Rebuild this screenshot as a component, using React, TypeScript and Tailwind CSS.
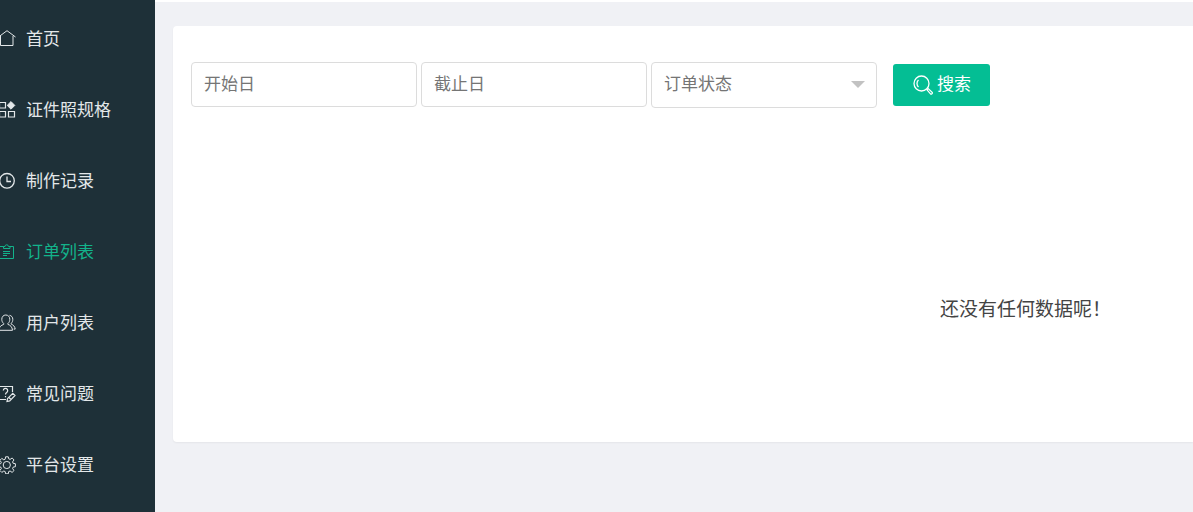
import type { ReactNode } from 'react'

interface NavItem {
  label: string
  icon: ReactNode
  active?: boolean
}

const navItems: NavItem[] = [
  {
    label: '首页',
    icon: <path d="M.5 7 9 .7 17.500 7M2.500 6v9.500h12.500V6" />,
  },
  {
    label: '证件照规格',
    icon: (
      <>
        <path d="M1.500 1.500h6v5.500h-6zM1.500 10.500h6v5.500h-6zM10.500 10.500h6v5.500h-6z" strokeWidth="1.200" />
        <path d="m13 .6 3.800 3.800L13 8.200 9.200 4.400z" fill="currentColor" />
      </>
    ),
  },
  {
    label: '制作记录',
    icon: (
      <g strokeWidth="1.300">
        <circle cx="9" cy="8.800" r="7.300" />
        <path d="M9 4.500v5h4" />
      </g>
    ),
  },
  {
    label: '订单列表',
    active: true,
    icon: (
      <>
        <path d="M5.500 3.500h-4v12h14v-12h-4" />
        <path d="M5.500 5.500v-2h1.500a1.700 1.700 0 0 1 3.400 0h1.600v2zM5 8.500h7M5 10.500h7M5 12.500h4" />
      </>
    ),
  },
  {
    label: '用户列表',
    icon: (
      <>
        <path d="M5.700 9.500C4.300 8.300 3.800 6.900 3.800 5.300c0-2.500 1.600-4.300 4-4.300s4 1.800 4 4.300c0 1.600-.5 3-1.900 4.200v.9c2.500.9 4.300 2.300 4.600 5.900H.8c.3-3.600 2.400-5 4.900-5.900z" />
        <path d="M11.500 1.300c2 .3 3.300 1.900 3.300 4.100 0 1.500-.5 2.800-1.600 3.900v.8c2 .8 3.700 2.300 4 5h-1.500" />
      </>
    ),
  },
  {
    label: '常见问题',
    icon: (
      <g strokeWidth="1.200">
        <path d="M14.500 7V1.500h-14v13h7.500" />
        <path d="M5.300 5.500a2.200 2.200 0 1 1 3.400 1.900c-.9.600-1.200 1-1.200 2M7.500 11v1.200" />
        <path d="m9.500 13.700 5.300-5.400 2.200 2.200-5.300 5.400-2.700.6zM11 12.500l2 2" />
      </g>
    ),
  },
  {
    label: '平台设置',
    icon: (
      <>
        <path d="m7.600.8-.4 2.400-1.400.6-2-1.400-1.900 1.900 1.400 2-.6 1.400-2.200.3v2.700l2.300.4.5 1.400-1.400 2 1.900 1.900 2-1.400 1.400.6.400 2.200h2.700l.4-2.300 1.400-.5 2 1.400 1.900-1.900-1.400-2 .6-1.400 2.200-.4V7.700l-2.300-.4-.5-1.400 1.400-2-1.900-1.900-2 1.400-1.400-.6-.4-2z" />
        <circle cx="8.800" cy="9" r="3.600" />
      </>
    ),
  },
]

function Sidebar() {
  return (
    <nav className="w-[155px] shrink-0 overflow-hidden bg-[#1e3038] pt-[3px]">
      {navItems.map((item) => (
        <a
          key={item.label}
          href="#"
          className={`flex h-[71px] items-center gap-2.5 text-[17px] ${item.active ? 'text-[#13b38b]' : 'text-[#e3e7e9]'}`}
        >
          <svg
            viewBox="0 0 18 18"
            className="-ml-0.5 size-[18px] shrink-0"
            fill="none"
            stroke="currentColor"
            strokeWidth="1"
            aria-hidden="true"
          >
            {item.icon}
          </svg>
          <span className="pt-0.5 whitespace-nowrap">{item.label}</span>
        </a>
      ))}
    </nav>
  )
}

function SearchIcon() {
  return (
    <svg viewBox="0 0 20 20" className="size-5" fill="none" stroke="currentColor" strokeWidth="1.300" aria-hidden="true">
      <circle cx="8.500" cy="8.500" r="7.500" />
      <path d="M5.500 12A4.800 4.800 0 0 1 5.500 5" />
      <path d="m14 14.800 1.200-1.200 4 3.800c.6 1-.8 2.200-1.700 1.500z" />
    </svg>
  )
}

const fieldClass =
  'w-[226px] rounded border border-[#dcdcdc] bg-white px-3 text-[17px] text-[#757575] placeholder:text-[#757575] outline-none'

function SearchForm() {
  return (
    <form className="flex items-start gap-1" onSubmit={(e) => e.preventDefault()}>
      <input type="text" aria-label="开始日" placeholder="开始日" className={`${fieldClass} h-[45px]`} />
      <input type="text" aria-label="截止日" placeholder="截止日" className={`${fieldClass} h-[45px]`} />
      <div className="relative">
        <select aria-label="订单状态" defaultValue="" className={`${fieldClass} h-[46px] appearance-none`}>
          <option value="">订单状态</option>
        </select>
        <svg
          viewBox="0 0 14 7"
          className="pointer-events-none absolute top-[19px] right-3 h-[7px] w-3.5 text-[#c2c2c2]"
          fill="currentColor"
          aria-hidden="true"
        >
          <path d="M0 0h14L7 7z" />
        </svg>
      </div>
      <button
        type="submit"
        className="mt-0.5 ml-3 flex h-[42px] items-center gap-1 rounded-[3px] bg-[#04be94] pr-[19px] pl-5 text-[17px] text-white"
      >
        <SearchIcon />
        搜索
      </button>
    </form>
  )
}

export default function App() {
  return (
    <div className="flex min-h-screen overflow-hidden bg-[#f0f1f5] font-['Liberation_Sans','Noto_Sans_CJK_SC',sans-serif]">
      <Sidebar />
      <main className="min-w-0 flex-1 border-t-2 border-white pt-6 pl-[18px]">
        <section className="rounded-l-sm bg-white px-[18px] pt-9 pb-[118px] shadow-[0_1px_2px_rgba(0,0,0,0.05)]">
          <SearchForm />
          {/* 空数据提示 */}
          <p className="mt-[187px] pr-16 text-right text-[19px] leading-[29px] text-[#444]">还没有任何数据呢！</p>
        </section>
      </main>
    </div>
  )
}
